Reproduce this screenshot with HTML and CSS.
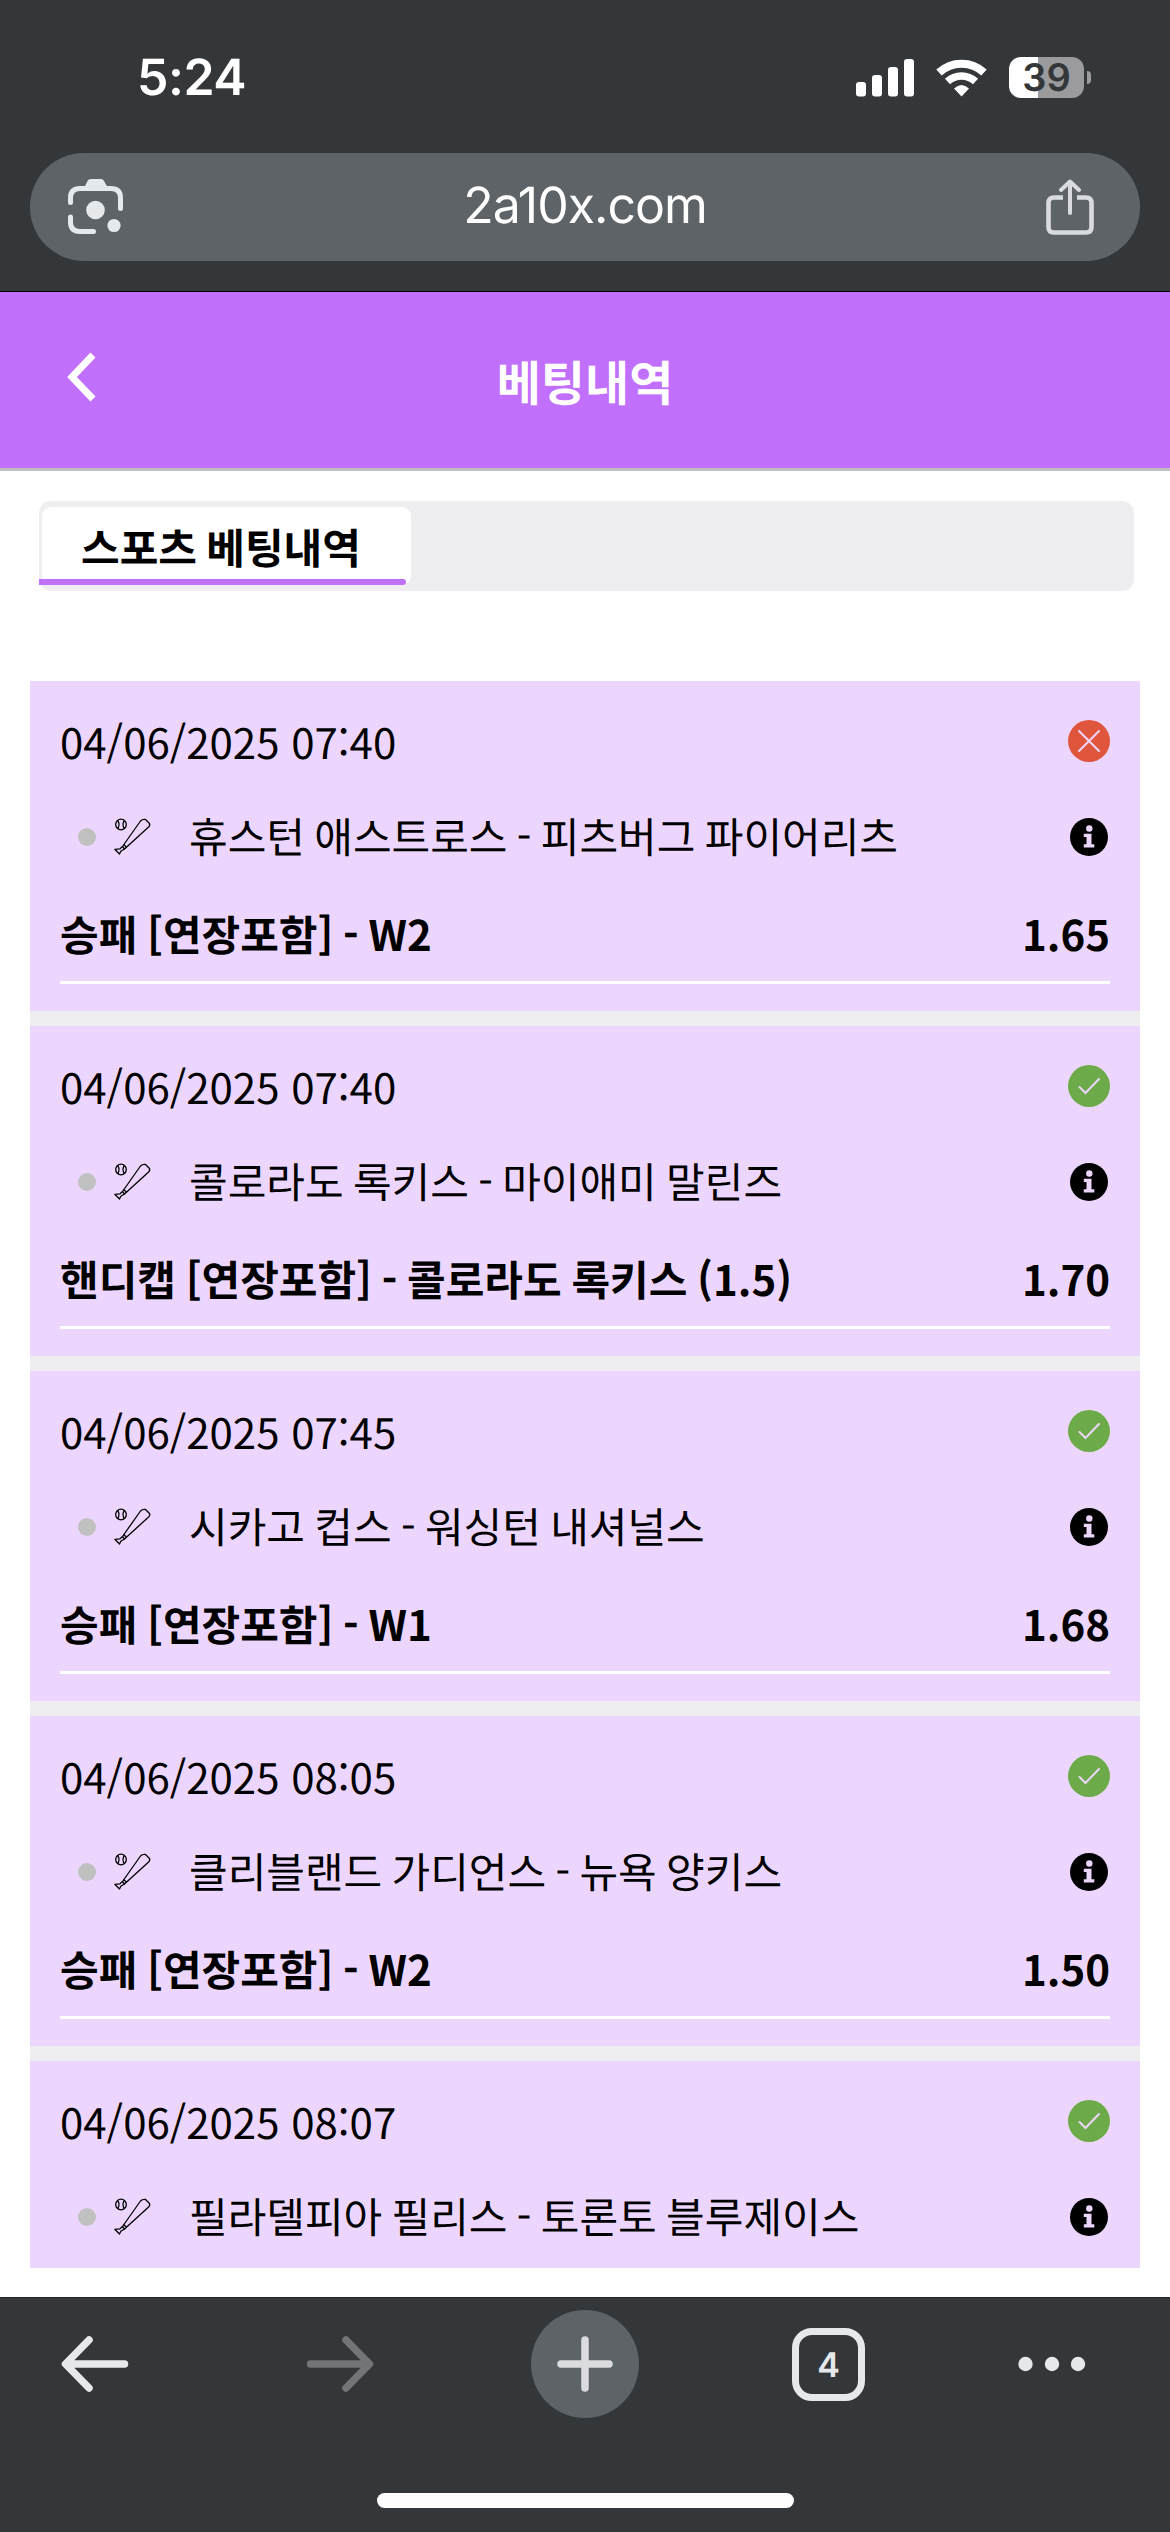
FILE: index.html
```
<!DOCTYPE html>
<html lang="ko">
<head>
    <meta charset="utf-8">
    <title>베팅내역</title>
    <link rel="stylesheet" href="styles.css">
</head>
<body>
    <!-- shared icons -->
    <svg class="defs" width="0" height="0">
        <symbol id="baseball" viewBox="0 0 38 38">
            <g fill="none" stroke="#000" stroke-width="1.3" stroke-linejoin="round">
                <circle cx="7" cy="6.5" r="5.3"/>
                <path d="M3.6 2.5Q6.5 6.5 3.6 10.5M10.4 2.5Q7.5 6.5 10.4 10.5"/>
                <path d="M8.5 28.5L26.5 3Q28.5 1 31.5 1.5L35.5 5.5Q36.5 8 33.5 10L10.5 31Z"/>
                <path d="M8.5 28.5L6 30.8L.8 31.3L5.5 36L6.8 33.3L10.5 31M9.5 26.5L12.5 29"/>
            </g>
        </symbol>
        <symbol id="info" viewBox="0 0 38 38">
            <circle cx="19" cy="19" r="19"/>
            <circle cx="19.3" cy="10.5" r="3.2" fill="#edd6fd"/>
            <path d="M13.8 15.8H21.5V26.2H24.3V29.4H13.8V26.2H16.5V19H13.8Z" fill="#edd6fd"/>
        </symbol>
        <symbol id="won" viewBox="0 0 42 42">
            <circle cx="21" cy="21" r="21" fill="#6dab4a"/>
            <path d="M11.5 22L17.5 28L31 14" fill="none" stroke="#edd6fd" stroke-width="2" stroke-linecap="round"/>
        </symbol>
        <symbol id="lost" viewBox="0 0 42 42">
            <circle cx="21" cy="21" r="21" fill="#df563c"/>
            <path d="M11 11L31 31M31 11L11 31" fill="none" stroke="#edd6fd" stroke-width="2" stroke-linecap="round"/>
        </symbol>
    </svg>

    <div class="browser-top">
        <div class="status-bar">
            <span class="time">5:24</span>
            <div class="status-icons">
                <svg class="signal" width="59" height="38" viewBox="0 0 59 38" fill="#fff">
                    <rect x="0" y="23" width="10" height="14.5" rx="3"/>
                    <rect x="16" y="16" width="10" height="21.5" rx="3"/>
                    <rect x="32" y="8" width="10" height="29.5" rx="3"/>
                    <rect x="48" y="0" width="10" height="37.5" rx="3"/>
                </svg>
                <svg class="wifi" width="52" height="38" viewBox="0 0 52 38" fill="none" stroke="#fff">
                    <path d="M3 13.5A33 33 0 0 1 48 13.5" stroke-width="8"/>
                    <path d="M11.5 22.5A20.5 20.5 0 0 1 39.5 22.5" stroke-width="7.5"/>
                    <path d="M18 29.5Q25.5 22.5 33 29.5L25.5 37.5Z" fill="#fff" stroke="none"/>
                </svg>
                <div class="battery"><span>39</span></div>
                <span class="battery-tip"></span>
            </div>
        </div>
        <div class="address-bar">
            <svg width="56" height="56" viewBox="0 0 56 56" fill="none" stroke="#e6e9ec" stroke-width="5" stroke-linecap="round">
                <path d="M2.5 23.5V19Q2.5 9.5 12 9.5H43Q52.5 9.5 52.5 19V29.5M2.5 38V43Q2.5 52.5 12 52.5H25.5"/>
                <path d="M16 9L19.5 2Q20.5 0 22.5 0H33Q35 0 36 2L40 9Z" fill="#e6e9ec" stroke="none"/>
                <circle cx="27.5" cy="31" r="9.3" fill="#e6e9ec" stroke="none"/>
                <circle cx="46" cy="46.5" r="6.6" fill="#e6e9ec" stroke="none"/>
            </svg>
            <span class="url">2a10x.com</span>
            <svg width="48" height="57" viewBox="0 0 48 57" fill="none" stroke="#d9dbe1" stroke-width="4.6" stroke-linecap="round" stroke-linejoin="round">
                <path d="M17 18.5H8Q2.5 18.5 2.5 24V48Q2.5 53.5 8 53.5H40Q45.5 53.5 45.5 48V24Q45.5 18.5 40 18.5H31" stroke-linecap="butt"/>
                <path d="M24 34V3M15 11L24 2.5L33 11" stroke-width="4"/>
            </svg>
        </div>
    </div>

    <div class="page-header">
        <svg class="back" width="30" height="50" viewBox="0 0 30 50" fill="none" stroke="#fff" stroke-width="7">
            <path d="M26 3L5 25L26 47"/>
        </svg>
        <h1>베팅내역</h1>
    </div>

    <div class="tabs">
        <div class="tab">스포츠 베팅내역</div>
    </div>

    <div class="bets">
        <div class="bet">
            <div class="row"><span class="date">04/06/2025 07:40</span><svg class="result"><use href="#lost"/></svg></div>
            <div class="row match"><i class="dot"></i><svg class="sport"><use href="#baseball"/></svg><span class="teams">휴스턴 애스트로스 - 피츠버그 파이어리츠</span><svg class="info"><use href="#info"/></svg></div>
            <div class="row pick"><span>승패 [연장포함] - W2</span><span>1.65</span></div>
        </div>
        <div class="bet">
            <div class="row"><span class="date">04/06/2025 07:40</span><svg class="result"><use href="#won"/></svg></div>
            <div class="row match"><i class="dot"></i><svg class="sport"><use href="#baseball"/></svg><span class="teams">콜로라도 록키스 - 마이애미 말린즈</span><svg class="info"><use href="#info"/></svg></div>
            <div class="row pick"><span>핸디캡 [연장포함] - 콜로라도 록키스 (1.5)</span><span>1.70</span></div>
        </div>
        <div class="bet">
            <div class="row"><span class="date">04/06/2025 07:45</span><svg class="result"><use href="#won"/></svg></div>
            <div class="row match"><i class="dot"></i><svg class="sport"><use href="#baseball"/></svg><span class="teams">시카고 컵스 - 워싱턴 내셔널스</span><svg class="info"><use href="#info"/></svg></div>
            <div class="row pick"><span>승패 [연장포함] - W1</span><span>1.68</span></div>
        </div>
        <div class="bet">
            <div class="row"><span class="date">04/06/2025 08:05</span><svg class="result"><use href="#won"/></svg></div>
            <div class="row match"><i class="dot"></i><svg class="sport"><use href="#baseball"/></svg><span class="teams">클리블랜드 가디언스 - 뉴욕 양키스</span><svg class="info"><use href="#info"/></svg></div>
            <div class="row pick"><span>승패 [연장포함] - W2</span><span>1.50</span></div>
        </div>
        <div class="bet">
            <div class="row"><span class="date">04/06/2025 08:07</span><svg class="result"><use href="#won"/></svg></div>
            <div class="row match"><i class="dot"></i><svg class="sport"><use href="#baseball"/></svg><span class="teams">필라델피아 필리스 - 토론토 블루제이스</span><svg class="info"><use href="#info"/></svg></div>
        </div>
    </div>

    <div class="browser-bottom">
        <div class="toolbar">
            <svg class="nav-back" width="68" height="62" viewBox="0 0 68 62" fill="none" stroke="#e6e9ec" stroke-width="7.5" stroke-linecap="round" stroke-linejoin="round">
                <path d="M63.5 31H5M28 7L4.5 31L28 55"/>
            </svg>
            <svg class="nav-forward" width="68" height="62" viewBox="0 0 68 62" fill="none" stroke="#737476" stroke-width="7.5" stroke-linecap="round" stroke-linejoin="round">
                <path d="M4.5 31H62M40 7L63.5 31L40 55"/>
            </svg>
            <div class="new-tab">
                <svg width="56" height="56" viewBox="0 0 56 56" stroke="#dadce0" stroke-width="7.5" stroke-linecap="round">
                    <path d="M4 28H52M28 4V52"/>
                </svg>
            </div>
            <div class="tab-count">4</div>
            <svg width="68" height="16" viewBox="0 0 68 16" fill="#e6e9ec">
                <circle cx="7.5" cy="8" r="7.2"/>
                <circle cx="34" cy="8" r="7.2"/>
                <circle cx="60" cy="8" r="7.2"/>
            </svg>
        </div>
        <div class="home-indicator"></div>
    </div>
</body>
</html>
```
FILE: styles.css
```
* {
    box-sizing: border-box;
}

body {
    margin: 0;
    width: 1170px;
    height: 2532px;
    display: flex;
    flex-direction: column;
    overflow: hidden;
    background-color: #fff;
    color: #000;
    font-family: "Noto Sans CJK KR", sans-serif;
    font-size: 42px;
    text-rendering: geometricPrecision;
}

svg {
    display: block;
    flex: none;
}

.defs {
    display: none;
}

/* browser top */
.browser-top {
    height: 292px;
    flex: none;
    padding: 0 30px;
    background-color: #34373a;
    border-bottom: 1px solid #000;
    font-family: Inter, sans-serif;
    color: #fff;
}

.status-bar {
    height: 153px;
    display: flex;
    justify-content: space-between;
    align-items: flex-start;
    padding: 57px 49px 0 107px;
}

.time {
    font-size: 50px;
    font-weight: 600;
    line-height: 42px;
    letter-spacing: -0.5px;
}

.status-icons {
    display: flex;
    align-items: center;
}

.wifi {
    margin: 0 21px;
}

.battery {
    width: 75px;
    height: 41px;
    border-radius: 12px;
    background: linear-gradient(to right, #fff 29px, #9b9b9d 29px);
    color: #34373a;
    font-size: 38px;
    font-weight: 600;
    line-height: 42px;
    text-align: center;
}

.battery-tip {
    width: 4px;
    height: 13px;
    margin-left: 3px;
    border-radius: 0 4px 4px 0;
    background-color: #9b9b9d;
}

.address-bar {
    height: 108px;
    border-radius: 54px;
    padding: 0 46px 0 38px;
    display: flex;
    align-items: center;
    justify-content: space-between;
    background-color: #5e6367;
}

.url {
    padding-bottom: 3px;
    font-size: 50px;
    letter-spacing: -1px;
}

/* page header */
.page-header {
    height: 179px;
    flex: none;
    display: grid;
    grid-template-columns: 1fr auto 1fr;
    align-items: center;
    padding: 0 67px;
    background-color: #c16ffd;
    border-bottom: 3px solid #c0c0c0;
    color: #fff;
}

.back {
    margin-bottom: 6px;
}

.page-header h1 {
    margin: 0;
    font-size: 48px;
    font-weight: 700;
    line-height: 70px;
}

.tabs {
    height: 90px;
    flex: none;
    margin: 30px 36px 90px 39px;
    padding-top: 6px;
    border-radius: 12px;
    background-color: #eeeef0;
}

.tab {
    position: relative;
    width: 369px;
    height: 78px;
    margin-left: 3px;
    padding-left: 39px;
    border-radius: 9px;
    background-color: #fff;
    font-weight: 700;
    line-height: 79px;
    word-spacing: -2.4px;
}

/* active tab underline */
.tab::after {
    content: "";
    position: absolute;
    left: -3px;
    bottom: 0;
    width: 367px;
    height: 6px;
    border-radius: 0 3px 3px 0;
    background-color: #c16ffd;
}

/* bets */
.bets {
    height: 1587px;
    flex: none;
    margin: 0 30px 29px;
    display: flex;
    flex-direction: column;
    gap: 15px;
    overflow: hidden;
    background-color: #eeeef0;
}

.bet {
    height: 330px;
    flex: none;
    padding: 13px 30px 26px;
    background-color: #edd6fd;
}

.row {
    height: 94px;
    display: flex;
    align-items: center;
    justify-content: space-between;
    line-height: 60px;
    white-space: nowrap;
}

.date {
    padding-top: 2px;
}

.result {
    width: 42px;
    height: 42px;
}

.match {
    height: 97px;
    padding: 0 2px 0 18px;
}

.dot {
    width: 18px;
    height: 18px;
    border-radius: 50%;
    background-color: #c0c0c0;
}

.sport {
    width: 38px;
    height: 38px;
    margin-left: 18px;
}

.teams {
    flex: 1;
    margin-left: 37px;
    padding-bottom: 1px;
    word-spacing: -2.4px;
}

.info {
    width: 38px;
    height: 38px;
}

.pick {
    height: 99px;
    padding-top: 2px;
    border-bottom: 3px solid #fff;
    font-weight: 700;
    word-spacing: -2px;
}

/* browser bottom */
.browser-bottom {
    flex: 1;
    background-color: #34373a;
    border-top: 1px solid #222;
}

.toolbar {
    height: 132px;
    display: flex;
    align-items: center;
    gap: 153px;
    padding-left: 61px;
}

.nav-back {
    margin-right: 24px;
}

.nav-forward {
    margin-right: 4px;
}

.new-tab {
    width: 108px;
    height: 108px;
    border-radius: 50%;
    display: flex;
    align-items: center;
    justify-content: center;
    background-color: #5e6367;
}

.tab-count {
    width: 73px;
    height: 73px;
    border: 7px solid #e6e9ec;
    border-radius: 20px;
    color: #e6e9ec;
    font-family: Inter, sans-serif;
    font-size: 34px;
    font-weight: 600;
    line-height: 61px;
    text-align: center;
}

.home-indicator {
    width: 417px;
    height: 15px;
    margin: 63px auto 0;
    border-radius: 8px;
    background-color: #fdfdfd;
}
```
